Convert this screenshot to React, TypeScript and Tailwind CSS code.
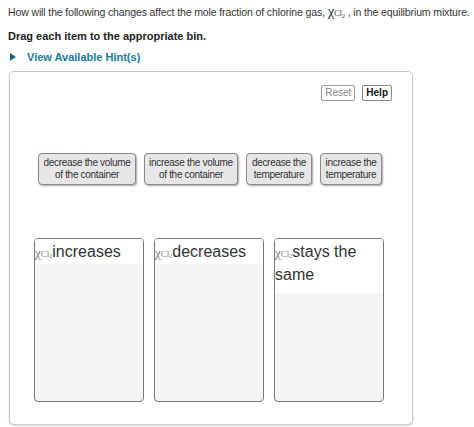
import React from "react";

function Chi({ big = false }: { big?: boolean }) {
  if (big) {
    return (
      <span className="font-['Liberation_Serif',serif] text-[#333] tracking-normal">
        <span className="text-[15px]">χ</span>
        <span className="text-[8px]">Cl</span>
        <span className="text-[6px] relative top-[2px]">2</span>
      </span>
    );
  }
  return (
    <span className="font-['Liberation_Serif',serif] text-[#777] tracking-normal">
      <span className="text-[13px]">χ</span>
      <span className="text-[9px]">Cl</span>
      <span className="text-[6px] relative top-[1px]">2</span>
    </span>
  );
}

const items = [
  { a: "decrease the volume", b: "of the container", w: "w-[98px]" },
  { a: "increase the volume", b: "of the container", w: "w-[94px]" },
  { a: "decrease the", b: "temperature", w: "w-[66px]" },
  { a: "increase the", b: "temperature", w: "w-[62px]" },
];

const bins = [
  { t: "increases", h: "h-[25px]" },
  { t: "decreases", h: "h-[25px]" },
  { t: "stays the same", h: "h-[54px]" },
];

export default function App() {
  return (
    <div className="w-[474px] h-[427px] bg-white overflow-hidden font-['Liberation_Sans',Arial,sans-serif] text-[#333]">
      <div className="pl-[8px] pt-[3px]">
        <p className="text-[10.5px] leading-[16px] tracking-[-0.12px] whitespace-nowrap">
          How will the following changes affect the mole fraction of chlorine gas, <Chi big /> , in the equilibrium mixture.
        </p>
        <p className="mt-[7px] text-[11px] leading-[14px] font-bold text-[#222]">
          Drag each item to the appropriate bin.
        </p>
        <div className="mt-[7px] flex items-center text-[11px] leading-[14px] font-bold text-[#1a7a9c]">
          <svg width="6" height="8" viewBox="0 0 6 8" className="ml-[2px] mr-[11px]">
            <path d="M0 0 L6 4 L0 8 Z" fill="#1f5f80" />
          </svg>
          <span>View Available Hint(s)</span>
        </div>
      </div>
      <div className="ml-[9px] mt-[7px] w-[404px] h-[354px] rounded-[5px] border border-[#c8c8c8] shadow-[0_1px_2px_rgba(0,0,0,0.15)] bg-white">
        <div className="flex justify-end gap-[7px] pt-[13px] pr-[20px]">
          <button className="h-[16px] px-[3px] rounded-[2px] border border-[#999] text-[10px] leading-[14px] text-[#888] bg-white">
            Reset
          </button>
          <button className="h-[16px] px-[3px] rounded-[2px] border border-[#888] text-[10px] leading-[14px] font-bold text-[#111] bg-white">
            Help
          </button>
        </div>
        <div className="flex gap-[8px] pl-[28px] mt-[52px]">
          {items.map((it) => (
            <div
              key={it.a + it.b}
              className={`${it.w} h-[32px] flex flex-col items-center justify-center text-center rounded-[4px] border border-[#8a8a8a] bg-[#e6e6e6] shadow-[1px_1px_2px_rgba(0,0,0,0.35)] text-[10px] leading-[12px] tracking-[-0.3px] text-[#333] whitespace-nowrap`}
            >
              <span>{it.a}</span>
              <span>{it.b}</span>
            </div>
          ))}
        </div>
        <div className="flex gap-[10px] pl-[24px] mt-[53px]">
          {bins.map((b) => (
            <div
              key={b.t}
              className="w-[110px] h-[164px] rounded-[4px] border border-[#777] bg-[#f4f4f6] flex flex-col overflow-hidden"
            >
              <div className={`${b.h} bg-white text-[16px] leading-[19px] text-[#333] pt-[3px]`}>
                <Chi />
                {b.t}
              </div>
            </div>
          ))}
        </div>
      </div>
    </div>
  );
}
